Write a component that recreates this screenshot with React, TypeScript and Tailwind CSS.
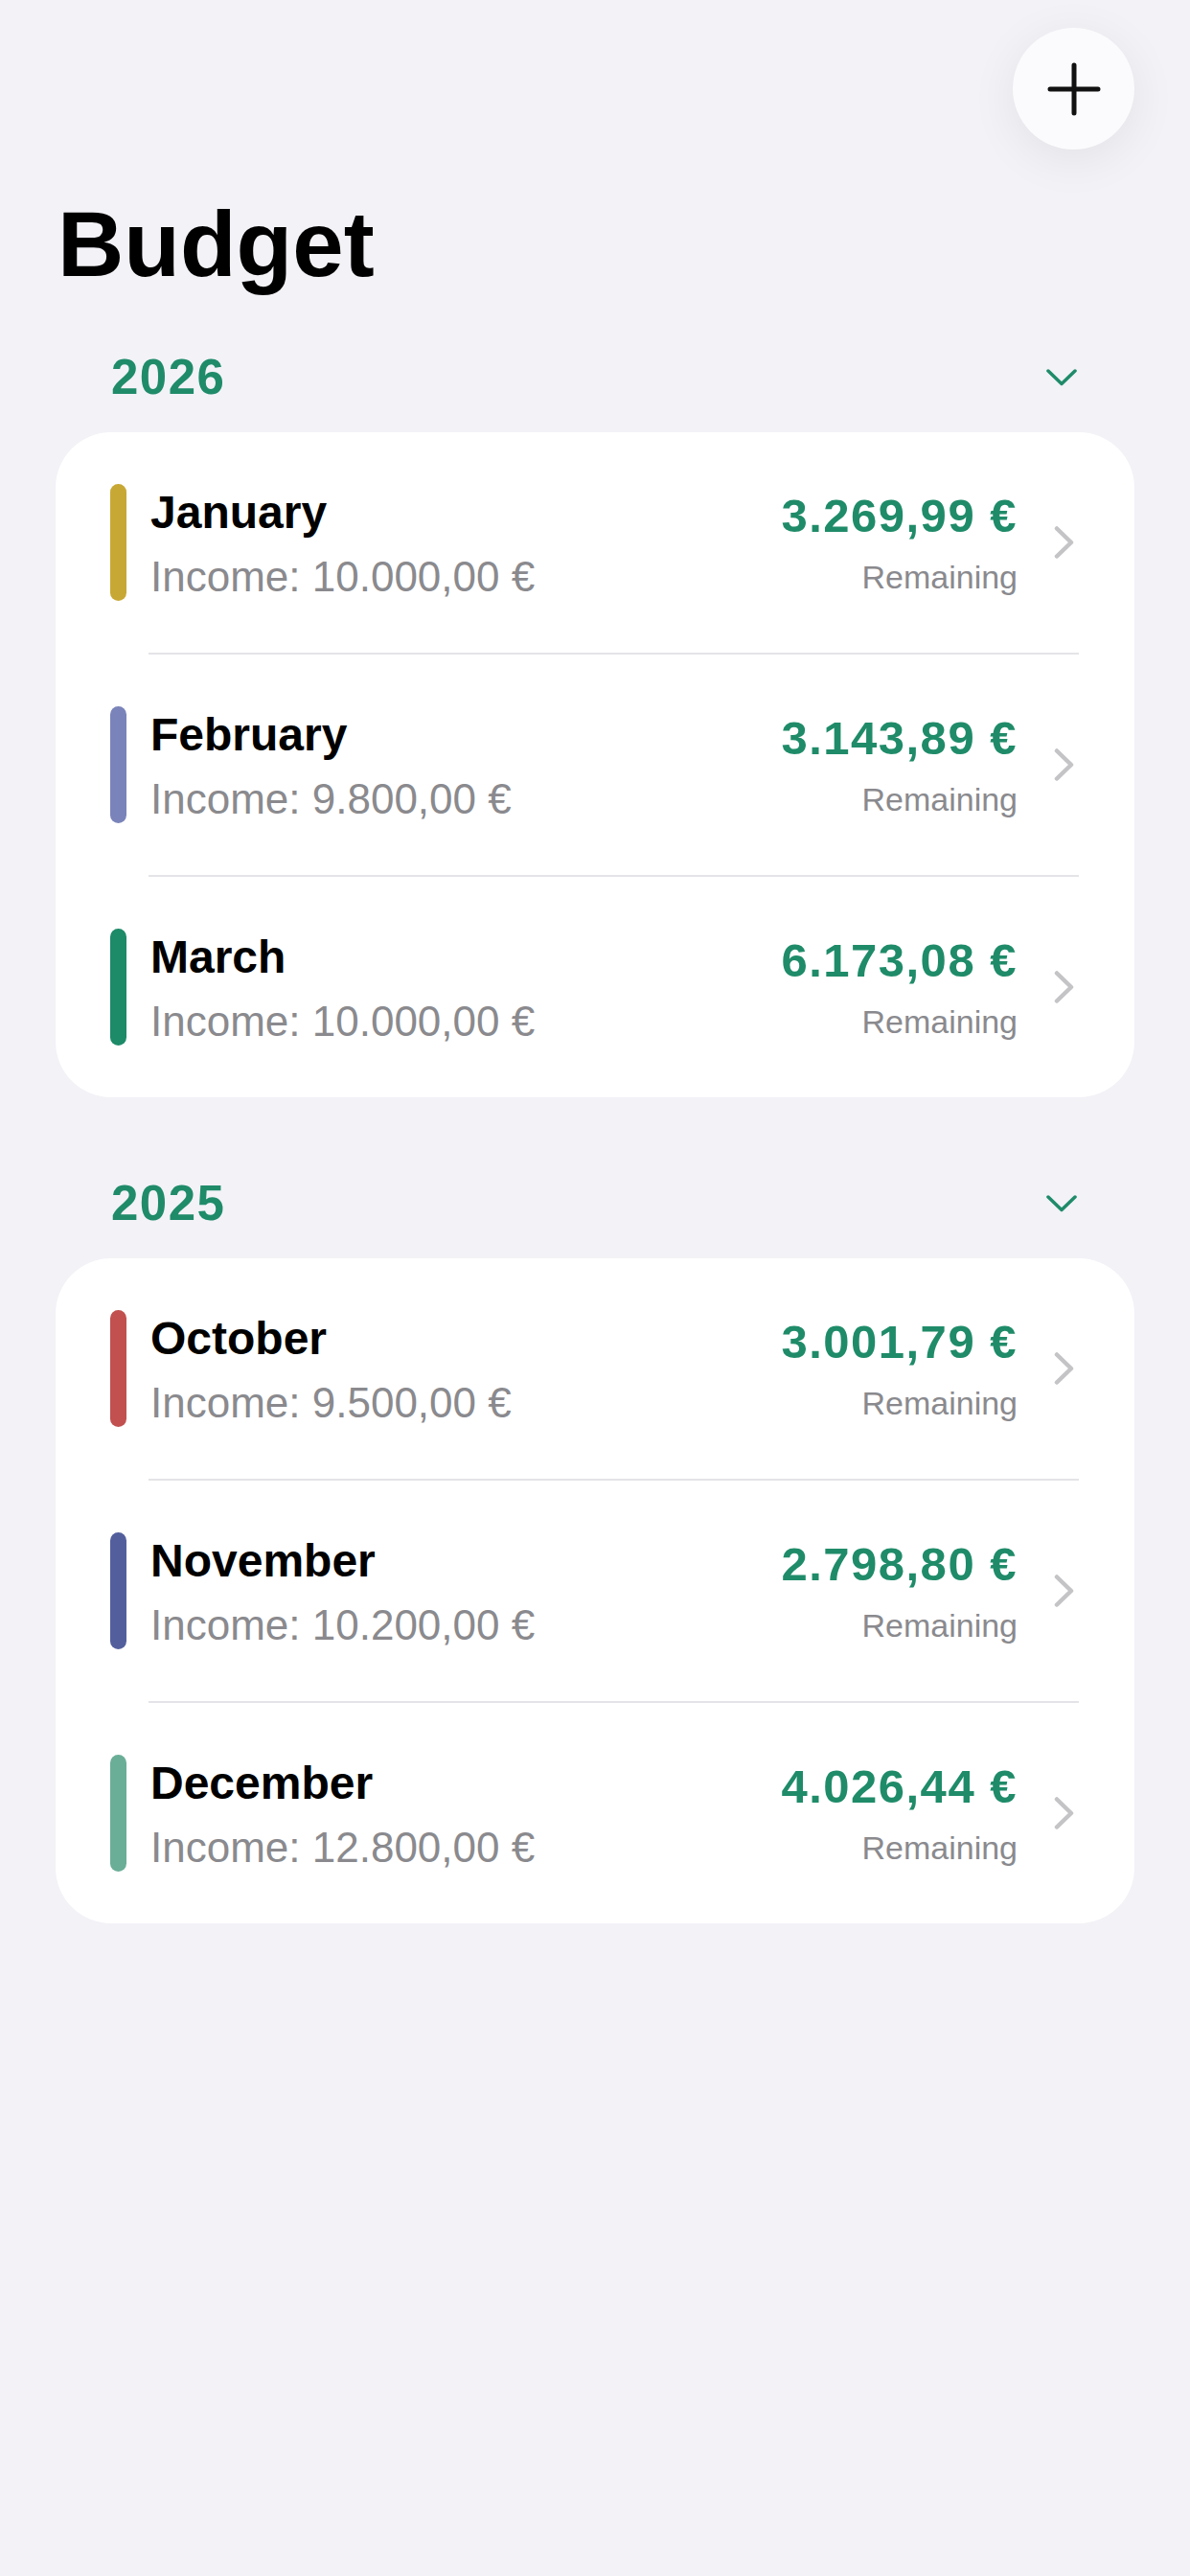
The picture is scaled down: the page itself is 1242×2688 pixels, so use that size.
import React from "react";

type Month = {
  name: string;
  income: string;
  remaining: string;
  color: string;
};

type Year = {
  year: string;
  months: Month[];
};

const years: Year[] = [
  {
    year: "2026",
    months: [
      { name: "January", income: "10.000,00 €", remaining: "3.269,99 €", color: "bg-[#c8a834]" },
      { name: "February", income: "9.800,00 €", remaining: "3.143,89 €", color: "bg-[#7a84ba]" },
      { name: "March", income: "10.000,00 €", remaining: "6.173,08 €", color: "bg-[#1d8a68]" },
    ],
  },
  {
    year: "2025",
    months: [
      { name: "October", income: "9.500,00 €", remaining: "3.001,79 €", color: "bg-[#c1504f]" },
      { name: "November", income: "10.200,00 €", remaining: "2.798,80 €", color: "bg-[#535f9d]" },
      { name: "December", income: "12.800,00 €", remaining: "4.026,44 €", color: "bg-[#6aae98]" },
    ],
  },
];

function ChevronRight() {
  return (
    <svg width="22" height="34" viewBox="0 0 22 34" fill="none" className="shrink-0">
      <path d="M3 2.5 L18 17 L3 31.5" stroke="#c4c4c7" strokeWidth="4.5" strokeLinecap="round" strokeLinejoin="round" />
    </svg>
  );
}

function ChevronDown() {
  return (
    <svg width="32" height="20" viewBox="0 0 32 20" fill="none">
      <path d="M2 3 L16 16.5 L30 3" stroke="#1f8b69" strokeWidth="3.5" strokeLinecap="round" strokeLinejoin="round" />
    </svg>
  );
}

function MonthRow({ month }: { month: Month }) {
  return (
    <div className="flex items-center pl-[57px] pr-[62px] py-[54px]">
      <div className={`w-[17px] h-[122px] rounded-full shrink-0 ${month.color}`} />
      <div className="flex-1 flex flex-col ml-[25px]">
        <div className="text-[48px] leading-[48px] font-bold text-black mt-[2px]">{month.name}</div>
        <div className="text-[44px] leading-[44px] text-[#8a8a8e] mt-[21px]">Income: {month.income}</div>
      </div>
      <div className="flex flex-col items-end mr-[38px]">
        <div className="text-[49px] leading-[49px] font-bold text-[#1f8b69] tracking-[1.5px]">{month.remaining}</div>
        <div className="text-[34px] leading-[34px] text-[#8a8a8e] mt-[22px]">Remaining</div>
      </div>
      <ChevronRight />
    </div>
  );
}

function YearSection({ data, first }: { data: Year; first: boolean }) {
  return (
    <section className={first ? "mt-[66px]" : "mt-[86px]"}>
      <div className="flex items-center justify-between pl-[58px] pr-[60px]">
        <span className="text-[51px] leading-[50px] font-bold text-[#1f8b69] tracking-[1.5px]">{data.year}</span>
        <ChevronDown />
      </div>
      <div className="mt-[32px] bg-white rounded-[58px] overflow-hidden">
        {data.months.map((m, i) => (
          <div key={m.name}>
            {i > 0 && <div className="h-[2px] bg-[#e4e4e8] ml-[97px] mr-[58px]" />}
            <MonthRow month={m} />
          </div>
        ))}
      </div>
    </section>
  );
}

export default function App() {
  return (
    <div
      className="w-[1242px] min-h-[2688px] bg-[#f2f2f7] px-[58px] pt-[29px]"
      style={{ fontFamily: '"Liberation Sans", Arial, sans-serif' }}
    >
      {/* toolbar */}
      <div className="flex justify-end">
        <button className="w-[127px] h-[127px] rounded-full bg-[#fbfbfd] flex items-center justify-center shadow-[0_10px_50px_rgba(0,0,0,0.07)]">
          <svg width="56" height="56" viewBox="0 0 56 56" fill="none">
            <path d="M28 3 V53 M3 28 H53" stroke="#111" strokeWidth="5" strokeLinecap="round" />
          </svg>
        </button>
      </div>

      <h1 className="mt-[51px] ml-[2px] text-[96px] leading-[96px] font-bold text-black">Budget</h1>

      {years.map((y, i) => (
        <YearSection key={y.year} data={y} first={i === 0} />
      ))}
    </div>
  );
}
